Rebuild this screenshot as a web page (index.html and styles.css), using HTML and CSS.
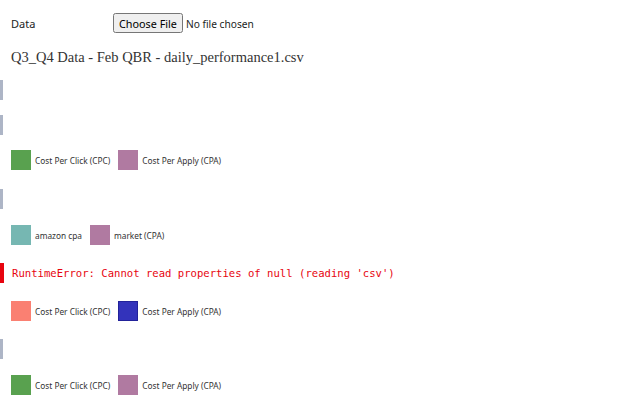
FILE: index.html
```html
<!DOCTYPE html>
<html>
<head>
<meta charset="utf-8">
<link rel="stylesheet" href="styles.css">
</head>
<body>
<div class="page">
  <form class="field">
    <label class="field-label">Data</label>
    <input class="file" type="file">
  </form>
  <h2 class="title">Q3_Q4 Data - Feb QBR - daily_performance1.csv</h2>
  <div class="cells">
    <div class="cell pending m-a"></div>
    <div class="cell pending m-b"></div>
    <div class="cell legend m-b">
      <span class="item"><span class="sw green"></span>Cost Per Click (CPC)</span>
      <span class="item"><span class="sw purple"></span>Cost Per Apply (CPA)</span>
    </div>
    <div class="cell pending m-e"></div>
    <div class="cell legend m-c">
      <span class="item"><span class="sw teal"></span>amazon cpa</span>
      <span class="item"><span class="sw purple"></span>market (CPA)</span>
    </div>
    <div class="cell error m-d">RuntimeError: Cannot read properties of null (reading 'csv')</div>
    <div class="cell legend m-d">
      <span class="item"><span class="sw salmon"></span>Cost Per Click (CPC)</span>
      <span class="item"><span class="sw blue"></span>Cost Per Apply (CPA)</span>
    </div>
    <div class="cell pending m-d"></div>
    <div class="cell legend m-c">
      <span class="item"><span class="sw green"></span>Cost Per Click (CPC)</span>
      <span class="item"><span class="sw purple"></span>Cost Per Apply (CPA)</span>
    </div>
  </div>
</div>
</body>
</html>
```

FILE: styles.css
```css
html, body {
  margin: 0;
  padding: 0;
  background: #fff;
}
.page {
  padding: 13px 0 0 0;
  font-family: "Noto Sans", sans-serif;
  color: #1b1e23;
}
.field {
  display: flex;
  align-items: center;
  padding-left: 11px;
  height: 20px;
  margin: 0;
}
.field-label {
  width: 102px;
  font-size: 11px;
}
.file {
  font-family: "Noto Sans", sans-serif;
  font-size: 10.2px;
  color: #1b1e23;
}
.file::file-selector-button {
  font-family: "Noto Sans", sans-serif;
  font-size: 10.8px;
  height: 20px;
  padding: 0 4px;
  margin-right: 3px;
}
.title {
  margin: 13px 0 0 11px;
  font-family: "Liberation Serif", serif;
  font-weight: normal;
  font-size: 14.5px;
  line-height: 22px;
  color: #333;
}
.cells {
  display: flex;
  flex-direction: column;
  margin-top: 12px;
}
.cell {
  height: 20px;
  box-sizing: border-box;
}
.m-a { margin-top: 0; }
.m-b { margin-top: 15px; }
.m-c { margin-top: 16px; }
.m-d { margin-top: 18px; }
.m-e { margin-top: 19px; }
.pending {
  border-left: 3px solid #adb5c6;
}
.legend {
  display: flex;
  align-items: center;
  gap: 8px;
  padding-left: 11px;
  font-size: 8.3px;
  color: #333;
}
.item {
  display: flex;
  align-items: center;
  gap: 4px;
}
.sw {
  width: 20px;
  height: 20px;
  display: inline-block;
  box-sizing: border-box;
}
.green { background: #59a14f; }
.purple { background: #b07aa1; }
.teal { background: #76b7b2; }
.salmon { background: #fa8072; }
.blue { background: #3333bb; border: 1px solid #22229a; }
.error {
  border-left: 4px solid #e7040f;
  padding-left: 8px;
  color: #e7040f;
  font-family: "DejaVu Sans Mono", monospace;
  font-size: 10.6px;
  line-height: 20px;
}
```
